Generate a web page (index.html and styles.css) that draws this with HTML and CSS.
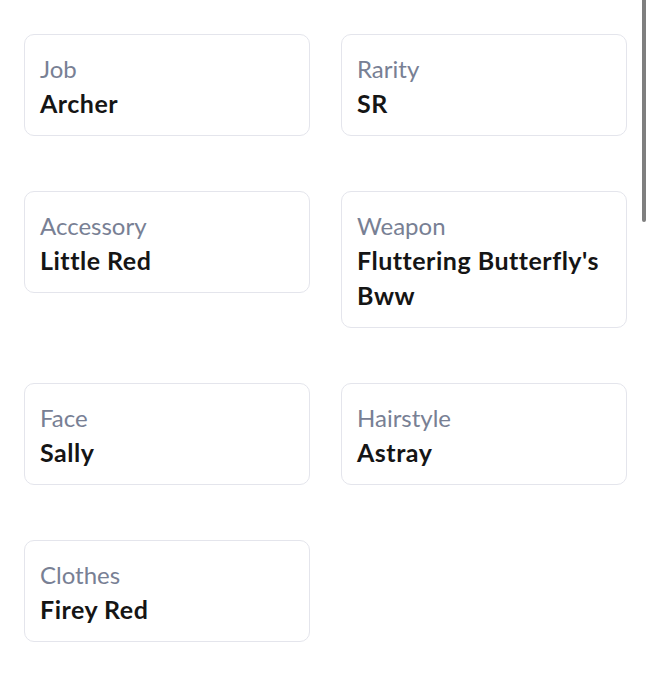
FILE: index.html
```html
<!DOCTYPE html>
<html lang="en">
<head>
<meta charset="utf-8">
<title>Character details</title>
<link rel="stylesheet" href="styles.css">
</head>
<body>
<main class="details">
  <div class="card"><div class="label">Job</div><div class="value">Archer</div></div>
  <div class="card"><div class="label">Rarity</div><div class="value">SR</div></div>
  <div class="card"><div class="label">Accessory</div><div class="value">Little Red</div></div>
  <div class="card"><div class="label">Weapon</div><div class="value">Fluttering Butterfly's Bww</div></div>
  <div class="card"><div class="label">Face</div><div class="value">Sally</div></div>
  <div class="card"><div class="label">Hairstyle</div><div class="value">Astray</div></div>
  <div class="card"><div class="label">Clothes</div><div class="value">Firey Red</div></div>
</main>
<div class="scrollbar"></div>
</body>
</html>
```

FILE: styles.css
```css
html, body {
  margin: 0;
  padding: 0;
  background: #ffffff;
}
body {
  font-family: "Lato", "Noto Sans", sans-serif;
  width: 652px;
  height: 680px;
  overflow: hidden;
  position: relative;
}
.details {
  display: grid;
  grid-template-columns: 286px 286px;
  column-gap: 31px;
  row-gap: 55px;
  align-items: start;
  padding: 34px 25px 0 24px;
}
.card {
  border: 1px solid #e4e5ec;
  border-radius: 10px;
  padding: 16px 14px 14px 15px;
  background: #fff;
}
.label {
  font-size: 24px;
  line-height: 35px;
  color: #788094;
  font-weight: 400;
}
.value {
  font-size: 25px;
  line-height: 35px;
  letter-spacing: 0.5px;
  color: #151515;
  font-weight: 700;
}
.scrollbar {
  position: absolute;
  top: 0;
  left: 642px;
  width: 4px;
  height: 222px;
  background: #7f7f7f;
  border-radius: 0 0 2px 2px;
}
```
